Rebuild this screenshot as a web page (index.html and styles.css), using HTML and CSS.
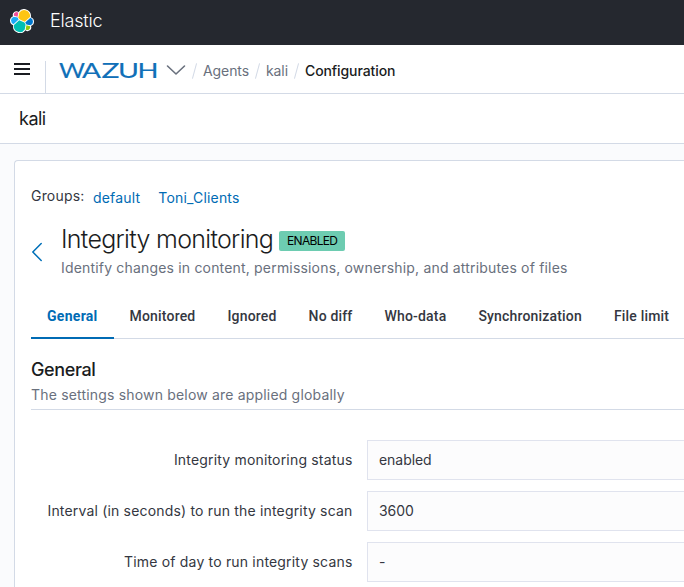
FILE: index.html
```
<!DOCTYPE html>
<html lang="en">
<head>
<meta charset="utf-8">
<title>Wazuh</title>
<link rel="stylesheet" href="styles.css">
</head>
<body>
<header class="topbar">
  <svg class="elastic" width="24" height="24" viewBox="0 0 32 32">
    <path fill="#fff" d="M32 16.77a6.33 6.33 0 0 0-1.14-3.63 6.27 6.27 0 0 0-3.05-2.27 9.13 9.13 0 0 0-7.2-10.7 9.13 9.13 0 0 0-9.15 3.8 4.84 4.84 0 0 0-5.8.05 4.86 4.86 0 0 0-1.66 5.6A6.43 6.43 0 0 0 0 15.65a6.35 6.35 0 0 0 4.22 5.93 9.1 9.1 0 0 0 16.33 6.87 4.83 4.83 0 0 0 7.44-5.62A6.43 6.43 0 0 0 32 16.77"/>
    <path fill="#FEC514" d="m12.58 13.79 7 3.2 7.07-6.2a7.9 7.9 0 0 0-6.24-9.27 7.9 7.9 0 0 0-8.05 3.35l-1.18 6.1z"/>
    <path fill="#00BFB3" d="M5.33 21.22a7.9 7.9 0 0 0 14.3 6.01l1.17-6.1-1.56-2.99-7.03-3.2z"/>
    <path fill="#F04E98" d="m5.29 9.07 4.8 1.13 1.05-5.45a3.79 3.79 0 0 0-5.85 4.32"/>
    <path fill="#1BA9F5" d="M4.87 10.22a5.3 5.3 0 0 0-.1 9.95l6.74-6.08-1.24-2.64z"/>
    <path fill="#93C90E" d="M20.87 27.23a3.79 3.79 0 0 0 5.83-4.31l-4.8-1.12z"/>
    <path fill="#07C" d="m21.85 20.56 5.28 1.23a5.3 5.3 0 0 0 .1-9.96l-6.91 6.05z"/>
  </svg>
  <span class="brand">Elastic</span>
</header>
<nav class="navbar">
  <button class="menu" aria-label="Menu"><i></i><i></i><i></i></button>
  <div class="crumbs">
    <svg class="wordmark" width="98" height="17"><text x="0" y="16.500" textLength="26" lengthAdjust="spacingAndGlyphs">W</text><text x="23" y="16.500" textLength="19" lengthAdjust="spacingAndGlyphs">A</text><text x="42.500" y="16.500" textLength="18" lengthAdjust="spacingAndGlyphs">Z</text><text x="59" y="16.500" textLength="21" lengthAdjust="spacingAndGlyphs">U</text><text x="78.500" y="16.500" textLength="21" lengthAdjust="spacingAndGlyphs">H</text></svg>
    <svg class="chevron" width="20" height="12" viewBox="0 0 20 12"><path d="M1.500 2 10 10l8.500-8"/></svg>
    <b class="slash"></b><a class="agents">Agents</a>
    <b class="slash"></b><a class="agent">kali</a>
    <b class="slash"></b><span class="current">Configuration</span>
  </div>
</nav>
<div class="agentbar">kali</div>
<main class="panel">
  <div class="groups"><span>Groups:</span><a class="g1">default</a><a>Toni_Clients</a></div>
  <div class="heading">
    <svg class="back" width="12" height="20" viewBox="0 0 12 20"><path d="M10.200 1.500 1.800 10l8.400 8.500"/></svg>
    <div>
      <div class="titlerow"><h1>Integrity monitoring</h1><span class="badge">ENABLED</span></div>
      <p class="sub desc">Identify changes in content, permissions, ownership, and attributes of files</p>
    </div>
  </div>
  <div class="tabs">
    <span class="tab active">General</span><span class="tab">Monitored</span><span class="tab">Ignored</span><span class="tab">No diff</span><span class="tab">Who-data</span><span class="tab">Synchronization</span><span class="tab">File limit</span>
  </div>
  <section class="settings">
    <h2>General</h2>
    <p class="sub">The settings shown below are applied globally</p>
  </section>
  <div class="form">
    <label>Integrity monitoring status</label><div class="field">enabled</div>
    <label>Interval (in seconds) to run the integrity scan</label><div class="field">3600</div>
    <label>Time of day to run integrity scans</label><div class="field">-</div>
  </div>
</main>
</body>
</html>
```

FILE: styles.css
```
* { box-sizing: border-box; }
html { overflow: hidden; }
body { margin: 0; height: 587px; display: flex; flex-direction: column; overflow: hidden; background: #fafbfd; color: #343741; font: 400 14px/20px Inter, sans-serif; }
h1, h2, p { margin: 0; }
a { white-space: nowrap; }
.topbar { flex: none; height: 45px; background: #25282f; display: flex; align-items: center; padding: 0 0 4px 10px; }
.brand { color: #fff; font-size: 18px; font-weight: 300; margin-left: 16px; letter-spacing: -.2px; }
.navbar { flex: none; height: 49px; background: #fff; border-bottom: 1px solid #d3dae6; display: flex; }
.menu { width: 46px; border: 0; padding: 18px 0 0 14px; background: none; display: flex; flex-direction: column; gap: 3px; }
.menu i { width: 16px; height: 2px; background: #1a1c21; }
.crumbs { border-left: 1px solid #d3dae6; margin: 16px 0 0 -1px; padding: 0 0 12px 13px; display: flex; align-items: center; height: 32px; white-space: nowrap; letter-spacing: -.09px; }
.wordmark { overflow: visible; margin-top: -3px; }
.wordmark text { font: 400 21.5px Lato, sans-serif; fill: #1070b8; stroke: #1070b8; stroke-width: .15px; letter-spacing: 0; }
.chevron { margin: -2px 0 0 9px; }
.chevron path, .back path { fill: none; stroke: #69707d; stroke-width: 1.6; stroke-linecap: round; stroke-linejoin: round; }
.slash { width: 1px; height: 16px; background: #d3dae6; transform: rotate(15deg); margin: 0 8px; }
.crumbs a { color: #69707d; }
.current { color: #1a1c21; font-weight: 500; }
.agentbar { flex: none; height: 50px; background: #fff; border-bottom: 1px solid #d3dae6; padding: 14px 19px; font-size: 18px; line-height: 22px; color: #1a1c21; letter-spacing: -.5px; }
.panel { flex: 1; min-height: 0; overflow: hidden; margin: 16px 0 0 14px; background: #fff; border: 1px solid #d3dae6; border-width: 1px 0 0 1px; border-radius: 4px 0 0 0; padding: 25px 0 0 16px; letter-spacing: .18px; }
.groups { display: flex; height: 24px; }
.groups span { width: 62px; }
.groups a { color: #006bb4; margin-top: 2px; }
.groups .g1 { margin-right: 18px; }
.heading { display: flex; height: 81px; }
.back { margin: 32px 18px 0 0; }
.back path { stroke: #0070b8; stroke-width: 1.5; }
.titlerow { display: flex; align-items: center; margin-top: 13px; height: 32px; }
h1 { font-size: 25px; line-height: 32px; font-weight: 300; color: #1a1c21; white-space: nowrap; letter-spacing: -.7px; }
.badge { width: 66px; height: 20px; margin: 3px 0 0 6px; border-radius: 2px; background: #6dccb1; color: #000; font-size: 12px; line-height: 20px; font-weight: 400; text-align: center; letter-spacing: -.7px; }
.sub { color: #69707d; white-space: nowrap; }
.desc { margin-top: 3px; }
.tabs { display: flex; height: 48px; border-bottom: 1px solid #d3dae6; }
.tab { flex: none; height: 48px; padding: 15px 16px 0; font: 500 14px/20px Roboto, sans-serif; white-space: nowrap; }
.tab.active { color: #006bb4; font-weight: 700; border-bottom: 2px solid #006bb4; letter-spacing: .28px; }
.settings { height: 71px; border-bottom: 1px solid #d3dae6; padding-top: 19px; }
h2 { font-size: 18px; line-height: 24px; font-weight: 500; color: #1a1c21; letter-spacing: -.36px; }
.settings .sub { margin-top: 3px; }
.form { display: grid; grid-template-columns: 321px 1fr; column-gap: 15px; row-gap: 11px; grid-auto-rows: 40px; margin-top: 30px; }
.form label { text-align: right; line-height: 40px; white-space: nowrap; margin-right: -.5px; }
.field { border: 1px solid #e0e3ee; border-right: 0; background: #fcfcfd; padding: 0 11px; line-height: 38px; letter-spacing: -.05px; }
```
